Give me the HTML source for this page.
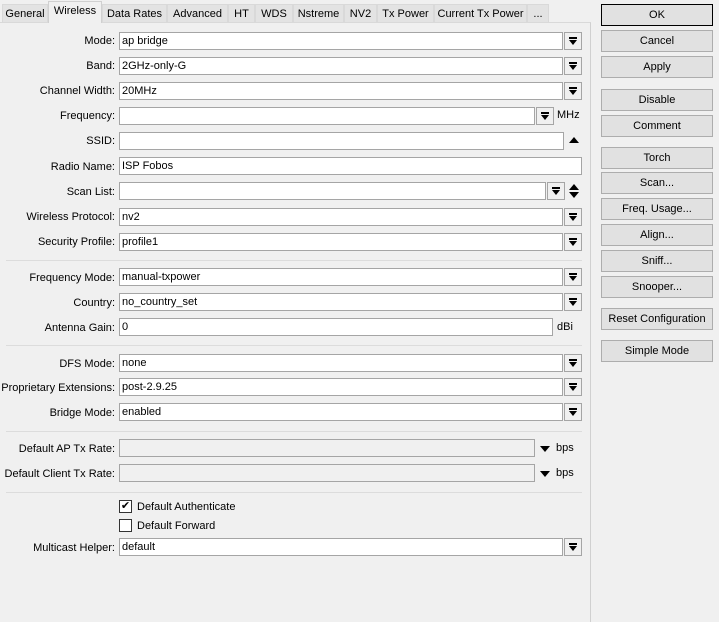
<!DOCTYPE html>
<html><head><meta charset="utf-8"><style>
*{box-sizing:border-box;margin:0;padding:0}
body{width:719px;height:618px;background:#f0f0f0;font-family:"Liberation Sans",Arial,sans-serif;font-size:11px;color:#000;position:relative;overflow:hidden}
div{position:absolute}
.tab{top:4px;height:18px;border:1px solid #d9d9d9;border-bottom:none;background:#e3e3e3;text-align:center;line-height:18px}
.sel{top:1px;height:22px;background:#f0f0f0;border-color:#d0d0d0;z-index:2;line-height:19px}
.panel{left:0;top:22px;width:591px;height:600px;border-right:1px solid #d0d0d0;border-top:1px solid #d9d9d9}
.lb{right:604px;text-align:right;white-space:nowrap;height:18px;line-height:19px}
.in{height:18px;background:#fff;border:1px solid #a5a5a5;line-height:17px;padding-left:2px;white-space:nowrap}
.gr{background:#f0f0f0}
.dd{width:18px;height:18px;border:1px solid #a5a5a5;background:#f0f0f0}
.dd:after{content:"";position:absolute;left:4px;top:4px;width:8px;height:2px;background:#000}
.dd i{position:absolute;left:4px;top:7px;width:0;height:0;border-left:4px solid transparent;border-right:4px solid transparent;border-top:5px solid #000}
.sep{left:6px;width:576px;height:1px;background:#dcdcdc}
.btn{left:601px;width:112px;height:22px;border:1px solid #adadad;background:#e1e1e1;text-align:center;line-height:21px;outline:1px solid #f0f0f0}
.cb{width:13px;height:13px;border:1px solid #333;background:#fff}
</style></head><body>
<div class="panel"></div>
<div class="tab" style="left:2px;width:46px">General</div>
<div class="tab sel" style="left:48px;width:54px">Wireless</div>
<div class="tab" style="left:102px;width:65px">Data Rates</div>
<div class="tab" style="left:167px;width:61px">Advanced</div>
<div class="tab" style="left:228px;width:27px">HT</div>
<div class="tab" style="left:255px;width:38px">WDS</div>
<div class="tab" style="left:293px;width:51px">Nstreme</div>
<div class="tab" style="left:344px;width:33px">NV2</div>
<div class="tab" style="left:377px;width:57px">Tx Power</div>
<div class="tab" style="left:434px;width:93px">Current Tx Power</div>
<div class="tab" style="left:527px;width:22px">...</div>

<div class="lb" style="top:32px">Mode:</div><div class="in" style="left:119px;top:32px;width:444px">ap bridge</div><div class="dd" style="left:564px;top:32px"><i></i></div>
<div class="lb" style="top:57px">Band:</div><div class="in" style="left:119px;top:57px;width:444px">2GHz-only-G</div><div class="dd" style="left:564px;top:57px"><i></i></div>
<div class="lb" style="top:82px">Channel Width:</div><div class="in" style="left:119px;top:82px;width:444px">20MHz</div><div class="dd" style="left:564px;top:82px"><i></i></div>
<div class="lb" style="top:107px">Frequency:</div><div class="in" style="left:119px;top:107px;width:416px"></div><div class="dd" style="left:536px;top:107px"><i></i></div><div style="left:557px;top:109px">MHz</div>
<div class="lb" style="top:132px">SSID:</div><div class="in" style="left:119px;top:132px;width:445px"></div><div style="left:569px;top:137px;border-left:5px solid transparent;border-right:5px solid transparent;border-bottom:6px solid #000"></div>
<div class="lb" style="top:158px">Radio Name:</div><div class="in" style="left:119px;top:157px;width:463px">ISP Fobos</div>
<div class="lb" style="top:183px">Scan List:</div><div class="in" style="left:119px;top:182px;width:427px"></div><div class="dd" style="left:547px;top:182px"><i></i></div><div style="left:569px;top:184px;border-left:5px solid transparent;border-right:5px solid transparent;border-bottom:6px solid #000"></div><div style="left:569px;top:192px;border-left:5px solid transparent;border-right:5px solid transparent;border-top:6px solid #000"></div>
<div class="lb" style="top:208px">Wireless Protocol:</div><div class="in" style="left:119px;top:208px;width:444px">nv2</div><div class="dd" style="left:564px;top:208px"><i></i></div>
<div class="lb" style="top:233px">Security Profile:</div><div class="in" style="left:119px;top:233px;width:444px">profile1</div><div class="dd" style="left:564px;top:233px"><i></i></div>
<div class="sep" style="top:260px"></div>
<div class="lb" style="top:269px">Frequency Mode:</div><div class="in" style="left:119px;top:268px;width:444px">manual-txpower</div><div class="dd" style="left:564px;top:268px"><i></i></div>
<div class="lb" style="top:294px">Country:</div><div class="in" style="left:119px;top:293px;width:444px">no_country_set</div><div class="dd" style="left:564px;top:293px"><i></i></div>
<div class="lb" style="top:319px">Antenna Gain:</div><div class="in" style="left:119px;top:318px;width:434px">0</div><div style="left:557px;top:321px">dBi</div>
<div class="sep" style="top:345px"></div>
<div class="lb" style="top:355px">DFS Mode:</div><div class="in" style="left:119px;top:354px;width:444px">none</div><div class="dd" style="left:564px;top:354px"><i></i></div>
<div class="lb" style="top:379px">Proprietary Extensions:</div><div class="in" style="left:119px;top:378px;width:444px">post-2.9.25</div><div class="dd" style="left:564px;top:378px"><i></i></div>
<div class="lb" style="top:404px">Bridge Mode:</div><div class="in" style="left:119px;top:403px;width:444px">enabled</div><div class="dd" style="left:564px;top:403px"><i></i></div>
<div class="sep" style="top:431px"></div>
<div class="lb" style="top:440px">Default AP Tx Rate:</div><div class="in gr" style="left:119px;top:439px;width:416px"></div><div style="left:540px;top:446px;border-left:5px solid transparent;border-right:5px solid transparent;border-top:6px solid #000"></div><div style="left:556px;top:442px">bps</div>
<div class="lb" style="top:465px">Default Client Tx Rate:</div><div class="in gr" style="left:119px;top:464px;width:416px"></div><div style="left:540px;top:471px;border-left:5px solid transparent;border-right:5px solid transparent;border-top:6px solid #000"></div><div style="left:556px;top:467px">bps</div>
<div class="sep" style="top:492px"></div>
<div class="cb" style="left:119px;top:500px;font-size:11px;line-height:10px;text-align:center">✔</div><div style="left:137px;top:501px">Default Authenticate</div>
<div class="cb" style="left:119px;top:519px"></div><div style="left:137px;top:520px">Default Forward</div>
<div class="lb" style="top:539px">Multicast Helper:</div><div class="in" style="left:119px;top:538px;width:444px">default</div><div class="dd" style="left:564px;top:538px"><i></i></div>

<div class="btn" style="top:4px;border-color:#000">OK</div>
<div class="btn" style="top:30px">Cancel</div>
<div class="btn" style="top:56px">Apply</div>
<div class="btn" style="top:89px">Disable</div>
<div class="btn" style="top:115px">Comment</div>
<div class="btn" style="top:147px">Torch</div>
<div class="btn" style="top:172px">Scan...</div>
<div class="btn" style="top:198px">Freq. Usage...</div>
<div class="btn" style="top:224px">Align...</div>
<div class="btn" style="top:250px">Sniff...</div>
<div class="btn" style="top:276px">Snooper...</div>
<div class="btn" style="top:308px">Reset Configuration</div>
<div class="btn" style="top:340px">Simple Mode</div>
</body></html>
